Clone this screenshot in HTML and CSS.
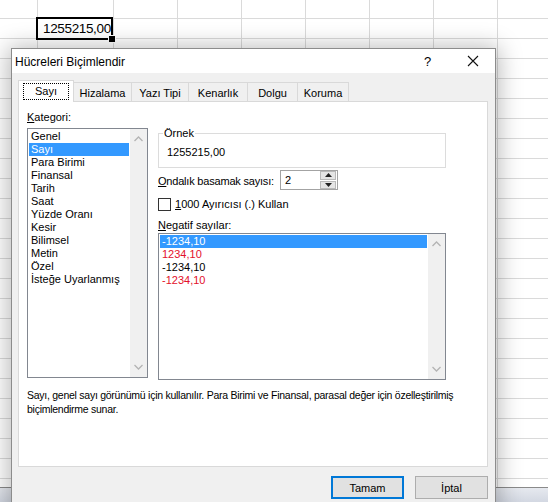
FILE: index.html
```html
<!DOCTYPE html>
<html lang="tr">
<head>
<meta charset="utf-8">
<title>Hücreleri Biçimlendir</title>
<link rel="stylesheet" href="styles.css">
</head>
<body>
<div class="sheet">
  <div class="grid">
    <div class="col c0"></div>
    <div class="col ca"></div>
    <div class="col"></div>
    <div class="col"></div>
    <div class="col"></div>
    <div class="col"></div>
    <div class="col"></div>
    <div class="col"></div>
    <div class="col"></div>
  </div>
  <div class="sheetbar"></div>
</div>

<div class="cell-sel"><span class="cell-text">1255215,00</span><span class="handle"></span></div>

<div class="dialog">
  <div class="titlebar">
    <span class="title">Hücreleri Biçimlendir</span>
    <span class="tb-btn help">?</span>
    <span class="tb-btn close">
      <svg width="12" height="12" viewBox="0 0 12 12"><path d="M1 1L11 11M11 1L1 11" stroke="#111" stroke-width="1.1" fill="none"/></svg>
    </span>
  </div>
  <div class="body">
    <div class="tabs">
      <div class="tab active w1"><span class="focus">Sayı</span></div>
      <div class="tab w2">Hizalama</div>
      <div class="tab w3">Yazı Tipi</div>
      <div class="tab w4">Kenarlık</div>
      <div class="tab w5">Dolgu</div>
      <div class="tab w6 last">Koruma</div>
    </div>
    <div class="panel">
      <div class="cols">
        <div class="leftcol">
          <div class="label"><u>K</u>ategori:</div>
          <div class="listbox cat">
            <div class="items">
              <div class="item">Genel</div>
              <div class="item sel">Sayı</div>
              <div class="item">Para Birimi</div>
              <div class="item">Finansal</div>
              <div class="item">Tarih</div>
              <div class="item">Saat</div>
              <div class="item">Yüzde Oranı</div>
              <div class="item">Kesir</div>
              <div class="item">Bilimsel</div>
              <div class="item">Metin</div>
              <div class="item">Özel</div>
              <div class="item">İsteğe Uyarlanmış</div>
            </div>
            <div class="vscroll">
              <svg width="9" height="6" viewBox="0 0 9 6"><path d="M0.5 5L4.5 1L8.5 5" stroke="#b4b4b4" stroke-width="1.3" fill="none"/></svg>
              <svg width="9" height="6" viewBox="0 0 9 6"><path d="M0.5 1L4.5 5L8.5 1" stroke="#b4b4b4" stroke-width="1.3" fill="none"/></svg>
            </div>
          </div>
        </div>
        <div class="rightcol">
          <fieldset class="sample">
            <legend>Örnek</legend>
            <div class="sample-val">1255215,00</div>
          </fieldset>
          <div class="row decimals">
            <span class="label"><u>O</u>ndalık basamak sayısı:</span>
            <div class="spin">
              <span class="spin-val">2</span>
              <div class="spin-btns">
                <span class="sb up"><svg width="7" height="4" viewBox="0 0 7 4"><path d="M0 4L3.5 0L7 4Z" fill="#222"/></svg></span>
                <span class="sb down"><svg width="7" height="4" viewBox="0 0 7 4"><path d="M0 0L3.5 4L7 0Z" fill="#222"/></svg></span>
              </div>
            </div>
          </div>
          <div class="row check">
            <span class="checkbox"></span>
            <span class="label"><u>1</u>000 Ayırıcısı (.) Kullan</span>
          </div>
          <div class="label neglabel"><u>N</u>egatif sayılar:</div>
          <div class="listbox neg">
            <div class="items">
              <div class="item sel">-1234,10</div>
              <div class="item red">1234,10</div>
              <div class="item">-1234,10</div>
              <div class="item red">-1234,10</div>
            </div>
            <div class="vscroll">
              <svg width="9" height="6" viewBox="0 0 9 6"><path d="M0.5 5L4.5 1L8.5 5" stroke="#b4b4b4" stroke-width="1.3" fill="none"/></svg>
              <svg width="9" height="6" viewBox="0 0 9 6"><path d="M0.5 1L4.5 5L8.5 1" stroke="#b4b4b4" stroke-width="1.3" fill="none"/></svg>
            </div>
          </div>
        </div>
      </div>
      <p class="desc">Sayı, genel sayı görünümü için kullanılır. Para Birimi ve Finansal, parasal değer için özelleştirilmiş biçimlendirme sunar.</p>
    </div>
    <div class="buttons">
      <button class="btn default">Tamam</button>
      <button class="btn">İptal</button>
    </div>
  </div>
</div>
</body>
</html>
```

FILE: styles.css
```css
* { box-sizing: border-box; }
html, body { margin: 0; padding: 0; }
body {
  width: 548px;
  height: 502px;
  overflow: hidden;
  position: relative;
  background: #fff;
  font-family: "Liberation Sans", Arial, sans-serif;
  font-size: 11px;
  color: #000;
}

/* spreadsheet backdrop */
.sheet { display: flex; flex-direction: column; height: 502px; }
.grid { display: flex; height: 487px; }
.col {
  flex: none;
  width: 64px;
  border-right: 1px solid #dadada;
  background: repeating-linear-gradient(to bottom, transparent 0, transparent 18px, #dadada 18px, #dadada 19px, transparent 19px, transparent 20px);
}
.c0 { width: 38px; }
.ca { width: 76px; }
.sheetbar {
  flex: 1;
  border-top: 1px solid #8a8a8a;
  background: linear-gradient(to bottom, #e6e9ef, #d3d8e2);
}

.cell-sel {
  position: absolute;
  left: 36px;
  top: 17px;
  width: 77px;
  height: 23px;
  border: 2px solid #000;
  background: #fff;
  display: flex;
  align-items: center;
  padding-left: 5px;
}
.cell-text {
  font-size: 13.5px;
  letter-spacing: -0.35px;
  line-height: 16px;
  padding-top: 1px;
}
.handle {
  position: absolute;
  right: -4px;
  bottom: -4px;
  width: 6px;
  height: 6px;
  background: #000;
  outline: 1px solid #fff;
}

/* dialog */
.dialog {
  position: absolute;
  left: 11px;
  top: 48px;
  width: 485px;
  height: 470px;
  border: 1px solid #8c8c8c;
  background: #f0f0f0;
  box-shadow: 0 2px 22px 3px rgba(0,0,0,0.28);
  display: flex;
  flex-direction: column;
}
.titlebar {
  height: 24px;
  background: #fff;
  display: flex;
  align-items: center;
  padding-left: 3px;
}
.title { flex: 1; font-size: 12px; padding-top: 1px; }
.tb-btn {
  width: 45px;
  height: 24px;
  display: flex;
  align-items: center;
  justify-content: center;
}
.help { font-size: 13px; }
.close svg { display: block; }

.body { padding: 7px 7px 0 6px; display: flex; flex-direction: column; }

.tabs { display: flex; align-items: flex-end; height: 21px; position: relative; z-index: 1; }
.tab {
  height: 19px;
  border: 1px solid #d9d9d9;
  border-right: none;
  border-bottom: none;
  background: #f0f0f0;
  display: flex;
  align-items: center;
  justify-content: center;
  padding-top: 1px;
}
.tab.last { border-right: 1px solid #d9d9d9; }
.tab.active {
  height: 22px;
  margin-bottom: -1px;
  background: #fff;
  border-right: 1px solid #d9d9d9;
  padding-bottom: 1px;
}
.tab.active + .tab { border-left: none; }
.w1 { width: 56px; }
.w2 { width: 57px; }
.w3 { width: 57px; }
.w4 { width: 59px; }
.w5 { width: 50px; }
.w6 { width: 52px; }
.focus {
  outline: 1px dotted #000;
  outline-offset: 0;
  padding: 1px 11px 1px 11px;
  line-height: 13px;
}

.panel {
  height: 366px;
  width: 470px;
  background: #fff;
  border: 1px solid #d9d9d9;
  padding: 9px 8px 0 8px;
}
.cols { display: flex; gap: 10px; }
.leftcol { width: 121px; }
.rightcol { width: 288px; padding-top: 16px; }

.label { line-height: 13px; white-space: nowrap; }
.leftcol > .label { margin-bottom: 4px; }
u { text-decoration-thickness: 1px; text-underline-offset: 1px; }

.listbox {
  display: flex;
  border: 1px solid #828790;
  background: #fff;
}
.listbox.cat { height: 250px; }
.listbox.neg { height: 147px; }
.items { flex: 1; padding: 1px 1px 0 1px; }
.item {
  height: 13px;
  line-height: 13px;
  padding-left: 2px;
  white-space: nowrap;
}
.item.sel { background: #3399ff; color: #fff; }
.item.red { color: #e3102b; }
.vscroll {
  width: 17px;
  background: #f0f0f0;
  display: flex;
  flex-direction: column;
  justify-content: space-between;
  align-items: center;
  padding: 7px 0 7px 0;
}
.vscroll svg { display: block; }

.sample {
  margin: 0;
  border: 1px solid #dcdcdc;
  padding: 4px 8px 3px 8px;
  height: 41px;
}
.sample legend {
  padding: 0 1px;
  margin-left: -4px;
  line-height: 13px;
}
.sample-val { line-height: 13px; padding-top: 2px; }

.row { display: flex; align-items: center; }
.decimals { margin-top: 2px; height: 20px; }
.decimals .label { width: 122px; padding-top: 2px; letter-spacing: -0.2px; }
.spin {
  width: 58px;
  height: 20px;
  border: 1px solid #a3a3a3;
  display: flex;
  align-items: center;
  padding-left: 4px;
  background: #fff;
}
.spin-val { flex: 1; line-height: 13px; }
.spin-btns { width: 16px; height: 18px; display: flex; flex-direction: column; gap: 1px; margin-right: 1px; }
.sb {
  flex: 1;
  background: #e5e5e5;
  border: 1px solid #b9b9b9;
  display: flex;
  align-items: center;
  justify-content: center;
}
.sb svg { display: block; }

.check { margin-top: 8px; height: 13px; }
.checkbox {
  width: 13px;
  height: 13px;
  border: 1px solid #333;
  background: #fff;
  margin-right: 4px;
}
.neglabel { margin-top: 8px; margin-bottom: 1px; }

.desc {
  margin: 9px 0 0 0;
  padding-left: 0;
  width: 450px;
  line-height: 13.5px;
  font-size: 10.5px;
  letter-spacing: -0.26px;
}

.buttons {
  display: flex;
  justify-content: flex-end;
  gap: 11px;
  margin-top: 9px;
}
.btn {
  width: 73px;
  height: 23px;
  font-family: "Liberation Sans", Arial, sans-serif;
  font-size: 11px;
  background: #e1e1e1;
  border: 1px solid #adadad;
  color: #000;
  padding: 0;
}
.btn.default { border: 2px solid #0078d7; }
```
